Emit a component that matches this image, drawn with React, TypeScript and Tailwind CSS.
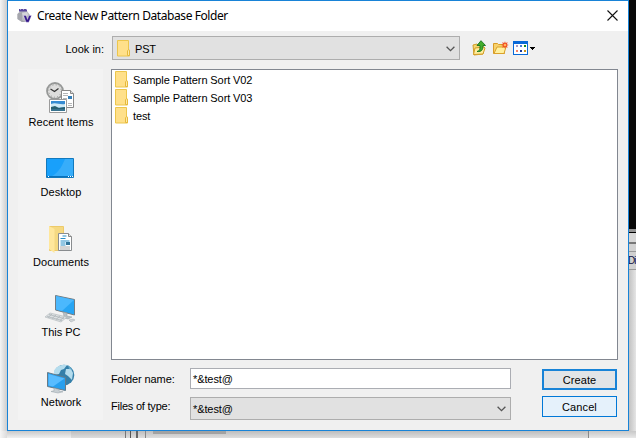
import React from 'react';

function FolderIcon() {
  return (
    <svg width="14" height="17" viewBox="0 0 14 17" className="shrink-0">
      <path d="M.5.5h11v9l1 .5v6H.5z" fill="#ffe08a" stroke="#ecc64c" />
      <path d="M10.500 15.500v-4.500l1-1.500 1 1v5z" fill="#ffeaa6" stroke="#e6b93c" />
    </svg>
  );
}

function Chevron() {
  return (
    <svg width="9" height="6" viewBox="0 0 9 6" className="mt-px shrink-0">
      <path d="M.6.7 4.500 4.600 8.400.7" fill="none" stroke="#555" strokeWidth="1.300" />
    </svg>
  );
}

function AppIcon() {
  return (
    <svg width="15" height="16" viewBox="0 0 15 16" className="shrink-0">
      <path d="M3 3h7l3 4v4l-3 3H5L.5 11V6z" fill="#b9bac0" />
      <path d="M2 5l3-1v8l3 2H5L.5 11V6z" fill="#a5a6ad" />
      <path d="M5 5l5-1 1 3-4 4z" fill="#d5d5da" />
      <path d="M2 1h8v2.500H2z" fill="#5a489c" />
      <path d="M3 1.500h1M6 1.500h1M9 1.500h1" stroke="#a99bd0" />
      <path d="M6.500 7.500h2.500l1.500 4 1.500-4h2.500l-2.700 6.700h-2.600z" fill="#35178b" stroke="#fff" strokeWidth=".3" />
    </svg>
  );
}

function UpIcon() {
  return (
    <svg width="15" height="16" viewBox="0 0 15 16">
      <path d="M1 5l4-1 1 1h5v9l-9 1z" fill="#f6d671" stroke="#d29d27" />
      <path d="M1.500 14.500 3 8l9-1 1 1-2 6z" fill="#ffed9d" stroke="#d29d27" />
      <path d="M5 11.500c3-1 3-2 3-6H5L9 .7l4.500 4.800H11c0 4-1 6.500-6 6z" fill="#43ad2d" stroke="#17741c" strokeWidth=".9" />
    </svg>
  );
}

function NewFolderIcon() {
  return (
    <svg width="16" height="14" viewBox="0 0 16 14">
      <path d="M.5 2.500h4l1 1h6v9H.5z" fill="#f7d16b" stroke="#d99b25" />
      <path d="M1 12.500 4 6h9l-2 6.500z" fill="#fff09f" stroke="#daa12c" />
      <path d="M12 .2l.7 1.800 2-.7-.8 1.900 1.800.8-1.800.8.8 1.900-2-.7L12 7.800 11.200 6l-2 .7.800-1.900L8.200 4l1.800-.8-.8-1.900 2 .7z" fill="#f04f25" />
      <circle cx="12" cy="4" r="1.300" fill="#ffb45c" />
    </svg>
  );
}

function ViewIcon() {
  return (
    <svg width="22" height="14" viewBox="0 0 22 14" shapeRendering="crispEdges">
      <path fill="#0869d8" d="M0 0h15v14H0z" />
      <path fill="#fff" d="M1 3h13v10H1z" />
      <path fill="#a89bc4" d="M3 4h2v2H3z" />
      <path fill="#4579db" d="M7 4h2v2H7z" />
      <path fill="#148a1d" d="M11 4h2v2h-2z" />
      <path fill="#f38269" d="M3 9h2v2H3z" />
      <path fill="#173a9c" d="M7 9h2v2H7z" />
      <path fill="#c5931b" d="M11 9h2v2h-2z" />
      <path d="M17 6h5v1h-1v1h-1v1h-1V8h-1V7h-1z" fill="#000" />
    </svg>
  );
}

function RecentIcon() {
  return (
    <svg width="32" height="32" viewBox="0 0 32 32">
      <circle cx="10" cy="9" r="8" fill="#dededd" stroke="#969897" strokeWidth="1.800" />
      <circle cx="10" cy="9" r="6.200" fill="none" stroke="#888" strokeDasharray=".8 2.450" />
      <path d="M5.500 7 9.500 9.500l4-3" fill="none" stroke="#333" strokeWidth="1.200" />
      <path d="M16.500 8.500h9l3 3v14h-12z" fill="#fff" stroke="#888" />
      <path d="M25.500 8.500v3h3" fill="#ddd" stroke="#888" />
      <path d="M18 11.500h5m-5 2h5m-5 3h4m-4 2h4m1 3h4m-4 2h4" stroke="#b4b6b8" />
      <path d="M23 14h4v3h-4z" fill="#347eb8" />
      <path d="M4.500 17.500h17v13h-17z" fill="#fff" stroke="#9b9b9b" />
      <path d="M6 19h14v10H6z" fill="#358bd2" />
      <path d="M6 22c5-2 8 1 14 0v3l-8 1-6-1z" fill="#cfeaf6" />
      <path d="M6 25l4-1 4 2 6-1v4H6z" fill="#286070" />
      <path d="M6 28h14" stroke="#4a87af" />
    </svg>
  );
}

function DesktopIcon() {
  return (
    <svg width="32" height="32" viewBox="0 0 32 32">
      <path d="M1.500 6.500h27v19h-27z" fill="#18a0fb" stroke="#1279bd" />
      <path d="M20 7h8v17H7C14 20 17 14 20 7z" fill="#37adfa" />
      <path d="M2 24.500h26" stroke="#0872bd" />
      <path d="M3 24.500h1m19 0h1m1 0h1m1 0h1" stroke="#fff" />
    </svg>
  );
}

function DocumentsIcon() {
  return (
    <svg width="32" height="32" viewBox="0 0 32 32">
      <path d="M4.500 4.500h14v24h-14z" fill="#f5d982" stroke="#edca69" />
      <path d="M4 4l5.500 3v24L4 27z" fill="#ffe79c" />
      <path d="M13.500 11.500h10l3 3v14h-13z" fill="#fff" stroke="#898c8f" />
      <path d="M23.500 11.500v3h3" fill="#e5e5e5" stroke="#888" />
      <path d="M15.500 16.500h5m-3-2.500h4m-6 5h9m-9 2h5m-5 2h5" fill="none" stroke="#298fc7" />
      <path d="M21 20h4v3h-4z" fill="#32769b" />
      <path d="M15 25h10m-10 2h10" stroke="#aaa" />
    </svg>
  );
}

function PcIcon() {
  return (
    <svg width="32" height="32" viewBox="0 0 32 32">
      <path d="M10.500 3.500 29.500 7.500v15.500L10.500 18z" fill="#27a5f4" stroke="#737d84" />
      <path d="M11 4l18 4-12 11-6-1.500z" fill="#4bb8fd" />
      <path d="M18 20l4 1v3l5 1-4 2-7-2 3-1z" fill="#b8c0c5" stroke="#929ca1" strokeWidth=".5" />
      <path d="M5 21l17 4-6 5L0 25z" fill="#dce0e2" stroke="#aeb5b9" strokeWidth=".6" />
      <path d="M4 22.500l15 4M2 24.500l15 4M7 22l-4 3.500m8-2.500-4 3.500m8-2.500-4 3.500m8-2.500-4 3.500" stroke="#9fa7ac" strokeWidth=".6" />
      <path d="M24 28l4-1 2 1-4 2z" fill="#cfd4d7" stroke="#a3abb0" strokeWidth=".5" />
    </svg>
  );
}

function NetworkIcon() {
  return (
    <svg width="32" height="32" viewBox="0 0 32 32">
      <circle cx="19" cy="13" r="10.300" fill="#347fa9" />
      <path d="M9 9c2-5 8-7 13-6l-3 4-3 1-2 4-5 1zM21 7l5 0 2 4-1 7-4-4-3-2z" fill="#b4dced" />
      <path d="M23 3l5 5-4-1z" fill="#64a9ca" />
      <path d="M2.500 10.500l18 5v13l-18-4z" fill="#279fee" stroke="#667a87" />
      <path d="M3.500 12l16 4.500L8 24.500l-4.500-1z" fill="#58bcff" />
      <path d="M9 26l5 1.500v1.500l4 .8-5 1.200-7-1.500 3-.8z" fill="#c8cfd3" stroke="#929ea6" strokeWidth=".5" />
    </svg>
  );
}

const places = [
  { label: 'Recent Items', Icon: RecentIcon, spacing: 'tracking-[0px]' },
  { label: 'Desktop', Icon: DesktopIcon, spacing: 'tracking-[0.080px]' },
  { label: 'Documents', Icon: DocumentsIcon, spacing: 'tracking-[0.030px]' },
  { label: 'This PC', Icon: PcIcon, spacing: 'tracking-[-0.050px]' },
  { label: 'Network', Icon: NetworkIcon, spacing: 'tracking-[0px]' },
];

const folders = ['Sample Pattern Sort V02', 'Sample Pattern Sort V03', 'test'];

function Backdrop() {
  return (
    <div className="flex h-full flex-col">
      <div className="flex h-[431px] justify-between">
        <div className="w-[7px] bg-linear-to-r from-[#f5f5f5] to-[#cdcdcd]" />
        <div className="flex w-[8px] flex-col">
          <div className="h-[229px] bg-[#080808]" />
          <div className="h-[3px] bg-[#929292]" />
          <div className="h-px bg-black" />
          <div className="h-[9px] bg-[#d6d6d6]" />
          <div className="h-[2px] bg-[#777]" />
          <div className="h-[7px] bg-[#d1d1d1]" />
          <div className="h-px bg-[#999]" />
          <div className="h-[17px] bg-[#d0d0d0] text-[10px] leading-[17px] tracking-[-1px] text-[#101044]">Di</div>
          <div className="h-px bg-[#999]" />
          <div className="grow bg-linear-to-r from-[#bdbdbd] to-[#e5e5e5]" />
        </div>
      </div>
      <div className="flex h-[7px] bg-linear-to-b from-[#bdbdbd] to-[#dedede]">
        <div className="w-[7px] bg-linear-to-r from-[#f5f5f5] to-[#dcdcdc]" />
        <div className="w-[64px] bg-linear-to-b from-[#c9c9c9] to-[#f0f0f0]" />
        <div className="w-[54px]" />
        <div className="w-px bg-[#777]" />
        <div className="w-[4px]" />
        <div className="w-px bg-[#555]" />
        <div className="w-[5px]" />
        <div className="w-[2px] bg-[#666]" />
        <div className="w-[7px]" />
        <div className="w-px bg-[#888]" />
        <div className="w-[7px]" />
        <div className="h-[3px] w-[73px] bg-[#a2a2a2]" />
        <div className="w-[362px]" />
        <div className="w-px bg-[#888]" />
        <div className="grow bg-linear-to-b from-[#c8c8c8] to-[#e8e8e8]" />
      </div>
    </div>
  );
}

export default function App() {
  return (
    <div className="relative h-[438px] w-[636px] overflow-hidden bg-white font-['Liberation_Sans',Arial,sans-serif] text-[11px] leading-[14px] text-black">
      <Backdrop />
      <main className="absolute top-0 left-[7px] flex h-[431px] w-[622px] flex-col border border-[#1883d7] bg-[#f0f0f0]">
        <header className="flex h-[30px] shrink-0 items-center bg-white pr-[10px] pb-px pl-[9px]">
          <AppIcon />
          <h1 className="mt-px ml-[5px] grow font-['Noto_Sans',sans-serif] text-[12px] leading-[18px] tracking-[-0.420px] whitespace-nowrap">Create New Pattern Database Folder</h1>
          <svg width="11" height="11" viewBox="0 0 11 11"><path d="M.5.5l10 10m0-10-10 10" stroke="#111" strokeWidth="1.100" /></svg>
        </header>

        <div className="flex h-[38px] shrink-0 pt-[5px]">
          <div className="w-[104px] pt-[6px] pr-[8px] text-right tracking-[0px]">Look in:</div>
          <div className="flex h-[24px] w-[348px] items-center border border-[#adadad] bg-[#e1e1e1] pr-[4px] pl-[4px]">
            <FolderIcon />
            <span className="mt-px ml-[4px] grow tracking-[-0.150px]">PST</span>
            <Chevron />
          </div>
          <div className="flex pt-[4px] pl-[12px]">
            <UpIcon />
            <div className="ml-[6px] pt-px"><NewFolderIcon /></div>
            <div className="ml-[4px] pt-px"><ViewIcon /></div>
          </div>
        </div>

        <div className="flex grow pl-[10px]">
          <nav className="h-[351px] w-[85px] bg-[#f3f3f3] pt-[13px] pl-px">
            {places.map(({ label, Icon, spacing }) => (
              <div key={label} className="flex h-[70px] flex-col items-center">
                <Icon />
                <span className={`mt-px whitespace-nowrap ${spacing}`}>{label}</span>
              </div>
            ))}
          </nav>

          <section className="ml-[8px] w-[507px]">
            <div className="h-[291px] border border-[#828790] bg-white pt-px pl-[3px]">
              {folders.map((name) => (
                <div key={name} className="flex h-[18px] items-start">
                  <FolderIcon />
                  <span className="mt-[2px] ml-[4px] tracking-[-0.100px]">{name}</span>
                </div>
              ))}
            </div>
            <div className="flex pt-[8px]">
              <div className="w-[79px]">
                <div className="h-[28px] pt-[4px] tracking-[-0.100px]">Folder name:</div>
                <div className="pt-[3px] tracking-[-0.220px]">Files of type:</div>
              </div>
              <div className="w-[321px] tracking-[-0.100px]">
                <div className="h-[21px] border border-[#abadb3] bg-white pt-[3px] pl-[2px]">*&amp;test@</div>
                <div className="mt-[8px] flex h-[23px] items-center border border-[#adadad] bg-[#e1e1e1] pr-[4px] pl-[2px]">
                  <span className="grow">*&amp;test@</span>
                  <Chevron />
                </div>
              </div>
              <div className="ml-[31px] w-[75px] pt-px text-center tracking-[0.100px]">
                <button className="block h-[21px] w-full border-2 border-[#1883d7] bg-[#e1e4e7]">Create</button>
                <button className="mt-[6px] block h-[21px] w-full border border-[#0078d7] bg-[#e5f1fb]">Cancel</button>
              </div>
            </div>
          </section>
        </div>
      </main>
    </div>
  );
}
